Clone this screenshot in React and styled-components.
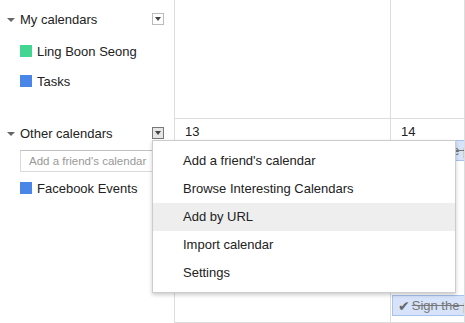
import styled, { createGlobalStyle } from "styled-components";

const GlobalStyle = createGlobalStyle`
  html, body {
    margin: 0;
    padding: 0;
    background: #fff;
    overflow: hidden;
  }
  body {
    font-family: "Liberation Sans", Arial, sans-serif;
    font-size: 13px;
    color: #222;
  }
`;

const myCalendars = [
  { name: "Ling Boon Seong", color: "#42d692" },
  { name: "Tasks", color: "#4986e7" },
];

const otherCalendars = [{ name: "Facebook Events", color: "#4986e7" }];

const menuItems = [
  "Add a friend's calendar",
  "Browse Interesting Calendars",
  "Add by URL",
  "Import calendar",
  "Settings",
];

export default function App() {
  return (
    <Page>
      <GlobalStyle />
      <Sidebar>
        <SectionHeader>
          <Caret />
          <SectionTitle>My calendars</SectionTitle>
          <DropButton />
        </SectionHeader>
        {myCalendars.map((cal) => (
          <CalendarRow key={cal.name}>
            <Swatch $color={cal.color} />
            {cal.name}
          </CalendarRow>
        ))}
        <SectionHeader $gap>
          <Caret />
          <SectionTitle>Other calendars</SectionTitle>
          <DropButton $active />
        </SectionHeader>
        <FriendInput placeholder="Add a friend's calendar" />
        {otherCalendars.map((cal) => (
          <CalendarRow key={cal.name}>
            <Swatch $color={cal.color} />
            {cal.name}
          </CalendarRow>
        ))}
      </Sidebar>

      <Grid>
        <Cell />
        <Cell />
        <Cell>
          <DayNumber>13</DayNumber>
        </Cell>
        <Cell>
          <DayNumber>14</DayNumber>
          <Event>
            <Check>✔</Check>
            <EventText>Sign the petition</EventText>
          </Event>
          <Event $top={134}>
            <Check>✔</Check>
            <EventText>Sign the petition</EventText>
          </Event>
        </Cell>
      </Grid>

      <Menu>
        {menuItems.map((item) => (
          <MenuItem key={item} $hover={item === "Add by URL"}>
            {item}
          </MenuItem>
        ))}
      </Menu>
    </Page>
  );
}

const Page = styled.div`
  position: relative;
  display: flex;
  width: 465px;
  height: 323px;
`;

const Sidebar = styled.div`
  width: 174px;
  flex-shrink: 0;
  display: flex;
  flex-direction: column;
  padding-top: 6px;
  box-sizing: border-box;
`;

const SectionHeader = styled.div`
  display: flex;
  align-items: center;
  height: 26px;
  padding: 0 10px 0 7px;
  margin-top: ${(p) => (p.$gap ? "24px" : "0")};
  margin-bottom: 4px;
`;

const Caret = styled.span`
  width: 0;
  height: 0;
  border-left: 4px solid transparent;
  border-right: 4px solid transparent;
  border-top: 4px solid #666;
  margin-right: 5px;
  margin-top: 1px;
`;

const SectionTitle = styled.span`
  flex: 1;
  font-size: 13px;
  color: #222;
`;

const DropButton = styled.span`
  position: relative;
  width: 10px;
  height: 10px;
  border: 1px solid ${(p) => (p.$active ? "#777" : "#bbb")};
  background: ${(p) => (p.$active ? "#e6e6e6" : "#fff")};
  display: flex;
  align-items: center;
  justify-content: center;

  &::after {
    content: "";
    width: 0;
    height: 0;
    border-left: 3.5px solid transparent;
    border-right: 3.5px solid transparent;
    border-top: 4px solid #444;
  }
`;

const CalendarRow = styled.div`
  display: flex;
  align-items: center;
  height: 30px;
  padding-left: 20px;
  font-size: 13px;
  color: #222;
`;

const Swatch = styled.span`
  width: 12px;
  height: 12px;
  background: ${(p) => p.$color};
  margin-right: 5px;
`;

const FriendInput = styled.input`
  margin: 0 0 1px 20px;
  width: 150px;
  height: 22px;
  box-sizing: border-box;
  border: 1px solid #d9d9d9;
  border-top-color: #c0c0c0;
  padding: 0 8px;
  font-family: "Liberation Sans", Arial, sans-serif;
  font-size: 11.5px;
  color: #222;
  outline: none;

  &::placeholder {
    color: #999;
  }
`;

const Grid = styled.div`
  flex: 1;
  display: grid;
  grid-template-columns: 216px 1fr;
  grid-template-rows: 119px 1fr;
  border-left: 1px solid #ddd;
  min-width: 0;
`;

const Cell = styled.div`
  border-right: 1px solid #ddd;
  border-bottom: 1px solid #ddd;
  overflow: hidden;
  display: flex;
  flex-direction: column;
`;

const DayNumber = styled.div`
  padding: 4px 0 0 10px;
  height: 17px;
  line-height: 17px;
  font-size: 13px;
  color: #222;
`;

const Event = styled.div`
  margin: ${(p) => (p.$top || 0)}px 0 0 1px;
  height: 19px;
  display: flex;
  align-items: center;
  white-space: nowrap;
  background: #d6e3fa;
  border: 1px solid #a5c2f0;
  border-right: none;
  color: #777;
  font-size: 13px;
  padding-left: 5px;
`;

const Check = styled.span`
  font-family: "DejaVu Sans", sans-serif;
  font-size: 14px;
  line-height: 1;
  color: #666;
  margin-right: 2px;
`;

const EventText = styled.span`
  text-decoration: line-through;
`;

const Menu = styled.div`
  position: absolute;
  left: 152px;
  top: 140px;
  width: 304px;
  box-sizing: border-box;
  background: #fff;
  border: 1px solid rgba(0, 0, 0, 0.2);
  box-shadow: 0 2px 4px rgba(0, 0, 0, 0.2);
  padding: 6px 0 5px;
`;

const MenuItem = styled.div`
  height: 28px;
  line-height: 28px;
  padding-left: 30px;
  font-size: 13px;
  color: #222;
  background: ${(p) => (p.$hover ? "#eee" : "transparent")};
`;
